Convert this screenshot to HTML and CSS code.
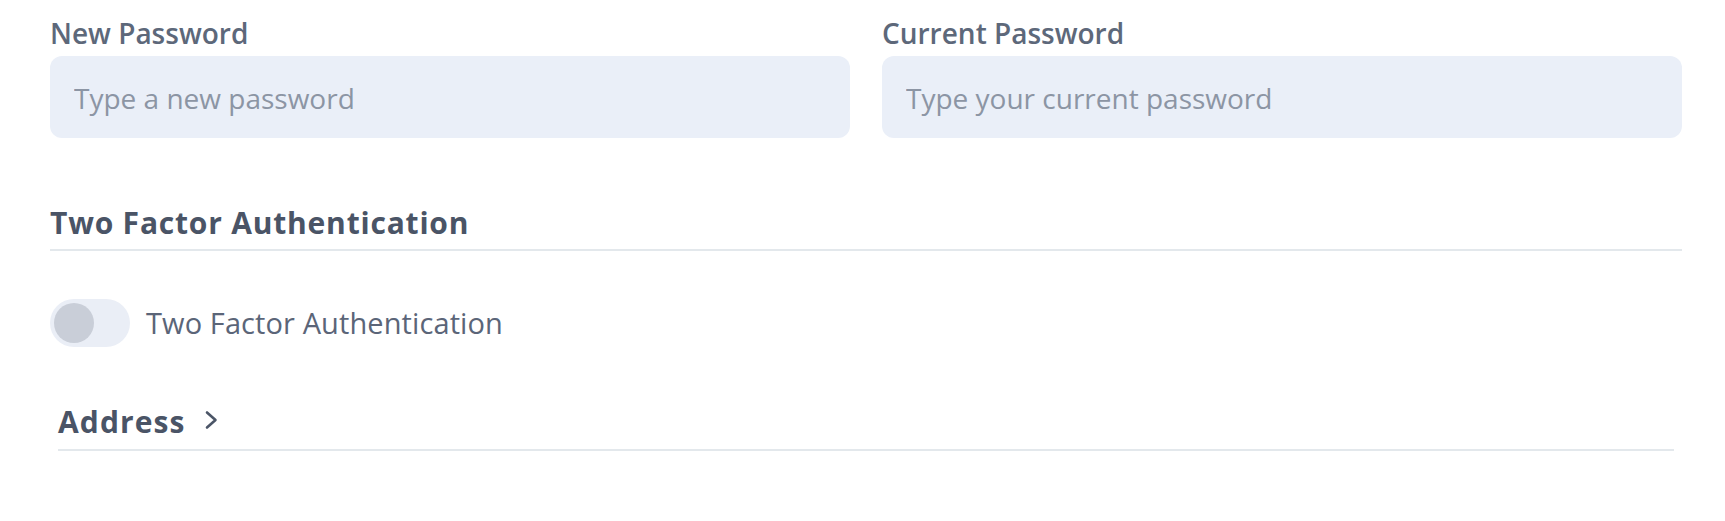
FILE: index.html
```html
<!DOCTYPE html>
<html lang="en">
<head>
<meta charset="utf-8">
<title>Security settings</title>
<link rel="stylesheet" href="styles.css">
</head>
<body>
<div class="page">
  <div class="fields">
    <label class="field">
      <span class="field-label">New Password</span>
      <input class="field-input" type="password" placeholder="Type a new password">
    </label>
    <label class="field">
      <span class="field-label">Current Password</span>
      <input class="field-input" type="password" placeholder="Type your current password">
    </label>
  </div>

  <section class="tfa">
    <h2 class="section-title">Two Factor Authentication</h2>
    <div class="toggle-row">
      <span class="toggle"><span class="knob"></span></span>
      <span class="toggle-label">Two Factor Authentication</span>
    </div>
  </section>

  <div class="collapse">
    <div class="collapse-head">
      <span class="collapse-title">Address</span>
      <svg class="chevron" width="14" height="20" viewBox="0 0 14 20" aria-hidden="true">
        <path d="M3 2.5 L11.5 10 L3 17.5" fill="none" stroke="#4b5567" stroke-width="2.6" stroke-linecap="round" stroke-linejoin="round"/>
      </svg>
    </div>
  </div>
</div>
</body>
</html>
```

FILE: styles.css
```css
* { box-sizing: border-box; }
html, body { margin: 0; padding: 0; background: #ffffff; }
body { font-family: "Open Sans", "Noto Sans", sans-serif; }

.page {
  padding: 15px 43px 0 50px;
}

.fields {
  display: grid;
  grid-template-columns: 1fr 1fr;
  column-gap: 32px;
}

.field {
  display: flex;
  flex-direction: column;
}

.field-label {
  font-family: "Open Sans", sans-serif;
  font-weight: 600;
  font-size: 28px;
  line-height: 36px;
  color: #5d687a;
  margin-bottom: 5px;
}

.field-input {
  height: 82px;
  border: none;
  border-radius: 12px;
  background: #eaeff8;
  padding: 2px 24px 0;
  font-family: "Open Sans", sans-serif;
  font-size: 28px;
  color: #4b5567;
  outline: none;
}
.field-input::placeholder { color: #8c95a4; }

.tfa { margin-top: 67px; }

.section-title {
  margin: 0;
  font-family: "Open Sans", sans-serif;
  font-weight: 700;
  font-size: 30px;
  letter-spacing: 0.8px;
  line-height: 36px;
  color: #4a5466;
  padding-bottom: 8px;
  border-bottom: 2px solid #e3e8ec;
}

.toggle-row {
  margin-top: 48px;
  display: flex;
  align-items: center;
  gap: 16px;
}

.toggle {
  width: 80px;
  height: 48px;
  border-radius: 24px;
  background: #eaeef6;
  display: flex;
  align-items: center;
  padding-left: 4px;
}
.knob {
  width: 40px;
  height: 40px;
  border-radius: 50%;
  background: #c9ced8;
}

.toggle-label {
  font-family: "Open Sans", sans-serif;
  font-size: 29px;
  letter-spacing: 0.1px;
  line-height: 36px;
  color: #5b6578;
}

.collapse {
  margin: 57px 8px 0 8px;
}
.collapse-head {
  display: flex;
  align-items: center;
  gap: 18px;
  padding-bottom: 9px;
  border-bottom: 2px solid #e3e8ec;
}
.collapse-title {
  font-family: "Open Sans", sans-serif;
  font-weight: 700;
  font-size: 30px;
  letter-spacing: 1.1px;
  line-height: 36px;
  color: #4a5466;
}
.chevron { margin-top: -4px; }
```
